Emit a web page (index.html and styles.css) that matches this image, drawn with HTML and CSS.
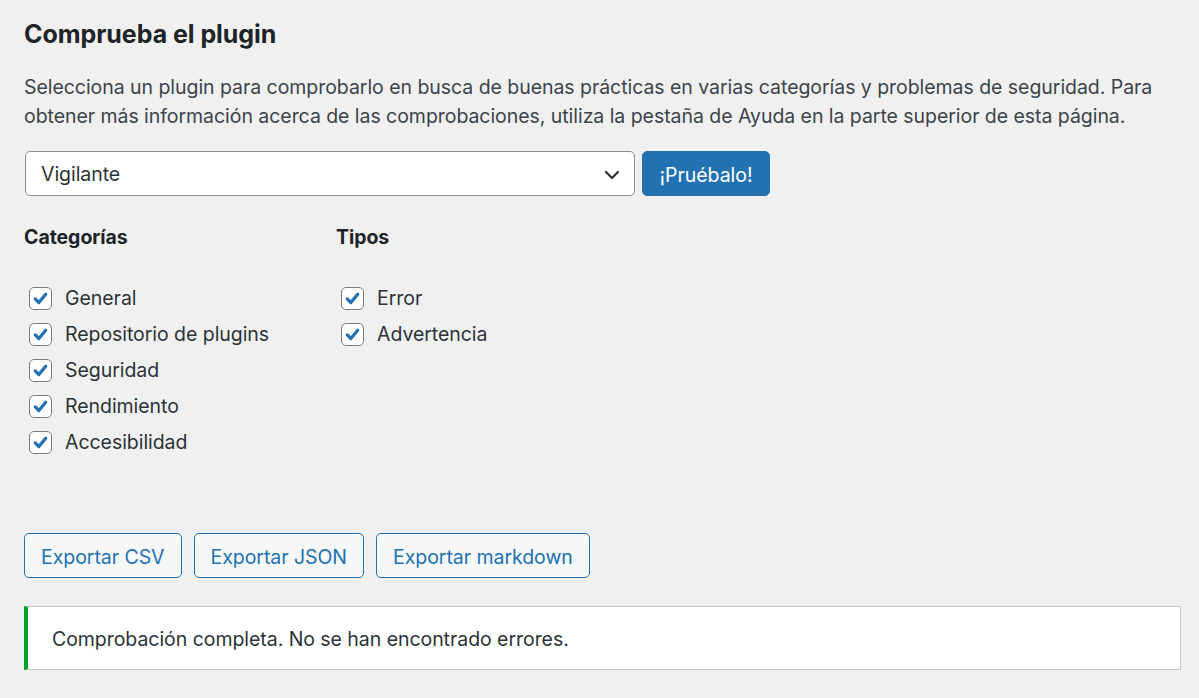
FILE: index.html
```html
<!DOCTYPE html>
<html lang="es">
<head>
    <meta charset="UTF-8">
    <title>Comprueba el plugin</title>
    <link rel="stylesheet" href="styles.css">
</head>
<body>
    <div class="wrap">
        <h2>Comprueba el plugin</h2>
        <p class="desc">Selecciona un plugin para comprobarlo en busca de buenas prácticas en varias categorías y problemas de seguridad. Para obtener más información acerca de las comprobaciones, utiliza la pestaña de Ayuda en la parte superior de esta página.</p>

        <div class="run-row">
            <div class="select">
                <span>Vigilante</span>
                <svg class="chevron" width="16" height="10" viewBox="0 0 16 10"><path d="M2 2 L8 8 L14 2" fill="none" stroke="#2c3338" stroke-width="2.2" stroke-linecap="round" stroke-linejoin="round"/></svg>
            </div>
            <button type="button" class="button-primary">¡Pruébalo!</button>
        </div>

        <div class="options">
            <div class="col col-cat">
                <h4>Categorías</h4>
                <ul class="checks">
                    <li><span class="cb"><svg viewBox="0 0 20 20"><path d="M4.5 10.5 L8.3 14.3 L15.5 5.5" fill="none" stroke="#2271b1" stroke-width="3.4" stroke-linecap="round" stroke-linejoin="round"/></svg></span>General</li>
                    <li><span class="cb"><svg viewBox="0 0 20 20"><path d="M4.5 10.5 L8.3 14.3 L15.5 5.5" fill="none" stroke="#2271b1" stroke-width="3.4" stroke-linecap="round" stroke-linejoin="round"/></svg></span>Repositorio de plugins</li>
                    <li><span class="cb"><svg viewBox="0 0 20 20"><path d="M4.5 10.5 L8.3 14.3 L15.5 5.5" fill="none" stroke="#2271b1" stroke-width="3.4" stroke-linecap="round" stroke-linejoin="round"/></svg></span>Seguridad</li>
                    <li><span class="cb"><svg viewBox="0 0 20 20"><path d="M4.5 10.5 L8.3 14.3 L15.5 5.5" fill="none" stroke="#2271b1" stroke-width="3.4" stroke-linecap="round" stroke-linejoin="round"/></svg></span>Rendimiento</li>
                    <li><span class="cb"><svg viewBox="0 0 20 20"><path d="M4.5 10.5 L8.3 14.3 L15.5 5.5" fill="none" stroke="#2271b1" stroke-width="3.4" stroke-linecap="round" stroke-linejoin="round"/></svg></span>Accesibilidad</li>
                </ul>
            </div>
            <div class="col">
                <h4>Tipos</h4>
                <ul class="checks">
                    <li><span class="cb"><svg viewBox="0 0 20 20"><path d="M4.5 10.5 L8.3 14.3 L15.5 5.5" fill="none" stroke="#2271b1" stroke-width="3.4" stroke-linecap="round" stroke-linejoin="round"/></svg></span>Error</li>
                    <li><span class="cb"><svg viewBox="0 0 20 20"><path d="M4.5 10.5 L8.3 14.3 L15.5 5.5" fill="none" stroke="#2271b1" stroke-width="3.4" stroke-linecap="round" stroke-linejoin="round"/></svg></span>Advertencia</li>
                </ul>
            </div>
        </div>

        <div class="exports">
            <button type="button" class="button">Exportar CSV</button>
            <button type="button" class="button">Exportar JSON</button>
            <button type="button" class="button">Exportar markdown</button>
        </div>

        <div class="notice">
            <p>Comprobación completa. No se han encontrado errores.</p>
        </div>
    </div>
</body>
</html>
```

FILE: styles.css
```css
body {
    margin: 0;
    background-color: #f0f0f1;
    color: #3c434a;
    font-family: Inter, "Noto Sans", sans-serif;
    font-size: 19.5px;
    line-height: 29px;
    letter-spacing: -0.05px;
}
.wrap {
    padding: 0 18px 0 24px;
}
h2 {
    margin: 18px 0 0;
    font-size: 25px;
    line-height: 33px;
    font-weight: 650;
    color: #1d2327;
}
.desc {
    margin: 22px 0 0;
    max-width: 1140px;
}
.run-row {
    display: flex;
    gap: 7px;
    margin-top: 20px;
    margin-left: 1px;
}
.select {
    width: 610px;
    height: 45px;
    box-sizing: border-box;
    display: flex;
    align-items: center;
    justify-content: space-between;
    padding: 2px 14px 0 15px;
    background: #fff;
    border: 1px solid #8c8f94;
    border-radius: 5px;
    color: #2c3338;
}
button {
    font-family: inherit;
    font-size: 19.5px;
    letter-spacing: inherit;
    cursor: pointer;
}
.button-primary {
    width: 128px;
    height: 45px;
    background-color: #2271b1;
    color: #fff;
    border: 1px solid #2271b1;
    border-radius: 5px;
    padding: 2px 0 0;
}
.options {
    display: flex;
    margin-top: 27px;
}
.col-cat {
    width: 312px;
}
h4 {
    margin: 0;
    font-size: 19.5px;
    line-height: 29px;
    font-weight: 650;
    color: #1d2327;
}
.checks {
    list-style: none;
    margin: 28px 0 0;
    padding: 0;
}
.checks li {
    display: flex;
    align-items: center;
    height: 36px;
    color: #2c3338;
}
.cb {
    width: 23px;
    height: 23px;
    box-sizing: border-box;
    margin: 0 13px 0 5px;
    background: #fff;
    border: 1.5px solid #787c82;
    border-radius: 5px;
    display: flex;
    align-items: center;
    justify-content: center;
}
.cb svg {
    width: 19px;
    height: 19px;
}
.exports {
    display: flex;
    gap: 12px;
    margin-top: 73px;
}
.button {
    height: 45px;
    padding: 2px 16px 0;
    background-color: #f6f7f7;
    color: #2271b1;
    border: 1.5px solid #2271b1;
    border-radius: 5px;
}
.notice {
    margin-top: 28px;
    height: 64px;
    box-sizing: border-box;
    background: #fff;
    border: 1.5px solid #c3c4c7;
    border-left: 4px solid #00a32a;
    display: flex;
    align-items: center;
    padding: 2px 0 0 24px;
}
.notice p {
    margin: 0;
    color: #2c3338;
}
```
